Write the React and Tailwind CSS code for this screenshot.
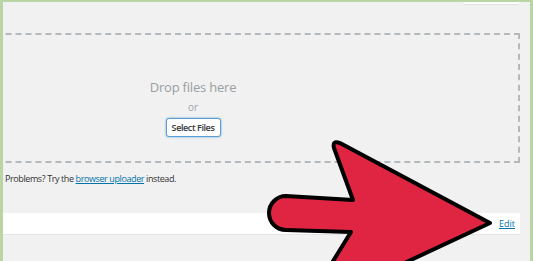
export default function App() {
    return (
        <div className="relative w-[533px] h-[261px] overflow-hidden bg-[#b9d4a5] pt-[2px] pl-[3px] pr-[3px]" style={{ fontFamily: '"Open Sans", "Liberation Sans", sans-serif' }}>
            <div className="h-full bg-[#f1f1f1] overflow-hidden">
                <div className="flex justify-end pr-[10px]">
                    <div className="w-[57px] h-[3px] bg-white border-b border-[#e2e2e2] rounded-b-sm"></div>
                </div>

                <div className="mt-[28px] ml-[-137px] mr-[10px] h-[130px] border-2 border-dashed border-[#b4b9be] flex flex-col items-center">
                    <p className="mt-[43px] text-[13px] leading-[18px] tracking-[-0.2px] text-[#9a9fa4]">Drop files here</p>
                    <p className="mt-[5px] text-[10px] leading-[12px] text-[#a0a5aa]">or</p>
                    <button className="mt-[5px] h-[19px] w-[55px] bg-white border border-[#5b9dd9] rounded-[3px] shadow-[0_0_2px_rgba(30,140,190,0.8)] text-[9px] font-semibold tracking-[-0.4px] text-[#32373c]">
                        Select Files
                    </button>
                </div>

                <p className="mt-[10px] ml-[2px] text-[9px] leading-[12px] tracking-[-0.4px] text-[#333]">
                    Problems? Try the <a className="text-[#0073aa] underline" href="#">browser uploader</a> instead.
                </p>

                <div className="mt-[28px] mr-[10px] h-[22px] bg-white border-b border-[#e5e5e5] flex items-center justify-end pr-[5px]">
                    <a className="text-[9px] text-[#0073aa] underline" href="#">Edit</a>
                </div>
            </div>

            <svg className="absolute left-0 top-0" width="533" height="261" viewBox="0 0 533 261">
                <path
                    d="M286 196 L353 200 L334 148 Q332 140 340 143 L490 223 L398 266 L330 266 L351 232 L286 230 A17 17 0 0 1 286 196 Z"
                    fill="#df2541"
                    stroke="#000"
                    strokeWidth="4"
                    strokeLinejoin="round"
                />
            </svg>
        </div>
    )
}
